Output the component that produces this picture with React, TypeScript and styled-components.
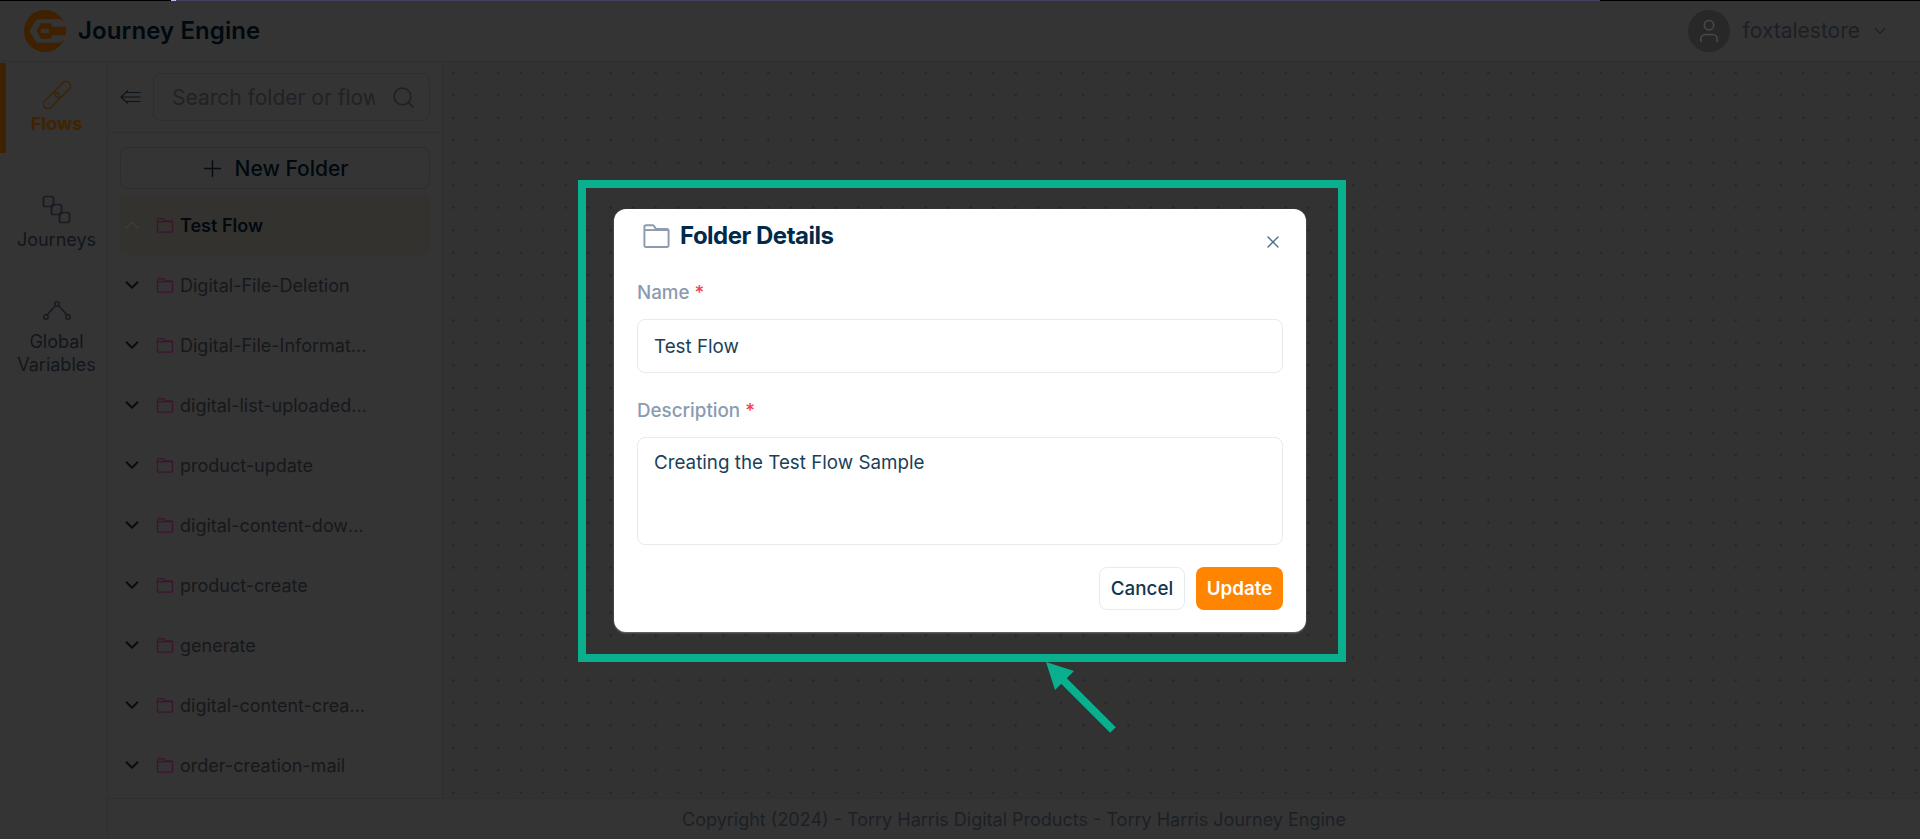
import styled, { createGlobalStyle } from 'styled-components';
import { ChevronDown, ChevronUp, Plus, Search, User, X } from 'lucide-react';

const GlobalStyle = createGlobalStyle`
  html, body {
    margin: 0;
    padding: 0;
    background: #333;
    font-family: Inter, "Noto Sans", sans-serif;
    overflow: hidden;
  }
  * {
    box-sizing: border-box;
  }
`;

const FLOWS = [
  'Digital-File-Deletion',
  'Digital-File-Information-Details',
  'digital-list-uploaded-files',
  'product-update',
  'digital-content-download',
  'product-create',
  'generate',
  'digital-content-creation',
  'order-creation-mail',
];

const FolderIcon = ({ size = 18, color = '#3c1430' }: { size?: number; color?: string }) => (
  <svg width={size} height={size} viewBox="0 0 24 24" fill="none" stroke={color} strokeWidth={size > 20 ? 1.6 : 1.8} strokeLinejoin="round">
    <path d="M2 5A1.500 1.500 0 0 1 3.500 3.500h5.200c.5 0 .9.2 1.200.6L11.500 6.500h9A1.500 1.500 0 0 1 22 8v12a1.500 1.500 0 0 1-1.500 1.500h-17A1.500 1.500 0 0 1 2 20Z" />
    <path d="M2 7.500h20" />
  </svg>
);

const App = () => {
  return (
    <>
      <GlobalStyle />
      <Page>
        <TopStrip>
          <StripPart $width={171} $color="#000" />
          <StripPart $width={5} $color="#c9b4f0" />
          <StripPart $width={1424} $color="#4a3f63" />
          <StripPart $width={320} $color="#000" />
        </TopStrip>
        <Dimmed>
          <Header>
            <Brand>
              <svg width="42" height="42" viewBox="0 0 42 42">
                <path d="M40 12A21 21 0 1 0 40 30L36 32.700H12.700L5.300 21L12.700 9.300H36Z" fill="#3f2100" />
                <path fillRule="evenodd" d="M12.700 21L16.700 13.300H27.700V16.700H42V25.300H27.700V28.700H16.700ZM17 19V23H25V19Z" fill="#3f2100" />
              </svg>
              <BrandName>Journey Engine</BrandName>
            </Brand>
            <UserMenu>
              <Avatar>
                <User size={28} strokeWidth={1.4} color="#484848" />
              </Avatar>
              <UserName>foxtalestore</UserName>
              <ChevronDown size={18} strokeWidth={1.6} color="#1c2026" />
            </UserMenu>
          </Header>
          <Main>
            <Rail>
              <RailItem $active $gap={25}>
                <svg width="30" height="30" viewBox="0 0 30 30" fill="none" stroke="#3f2100" strokeWidth="1.300">
                  <rect x="-9.500" y="-4.500" width="19" height="9" rx="4.500" transform="translate(20.500 9.500) rotate(-45)" />
                  <rect x="-9.500" y="-4.500" width="19" height="9" rx="4.500" transform="translate(9.500 20.500) rotate(-45)" />
                </svg>
                <RailLabel $active>Flows</RailLabel>
              </RailItem>
              <RailItem $gap={32}>
                <svg width="30" height="30" viewBox="0 0 30 30" fill="none" stroke="#181c22" strokeWidth="1.700">
                  <rect x="1.500" y="1.500" width="10" height="10" rx="2" />
                  <rect x="9.500" y="9.500" width="10" height="10" rx="2" />
                  <rect x="17.500" y="17.500" width="10" height="10" rx="2" />
                </svg>
                <RailLabel>Journeys</RailLabel>
              </RailItem>
              <RailItem $gap={0}>
                <svg width="30" height="27" viewBox="0 0 30 27" fill="none" stroke="#181c22" strokeWidth="1.600">
                  <path d="M5 15L13 6M17 6L25 15" />
                  <circle cx="15" cy="4" r="2.200" />
                  <circle cx="4" cy="17" r="2.200" />
                  <circle cx="26" cy="17" r="2.200" />
                </svg>
                <RailLabel>Global Variables</RailLabel>
              </RailItem>
            </Rail>
            <Workspace>
              <Columns>
                <Sidebar>
                  <SearchRow>
                    <svg width="21" height="16" viewBox="0 0 21 16" fill="none" stroke="#0b141b" strokeWidth="1.200">
                      <path d="M8 1.500L1 8l7 6.500M1 8h19.500M6 3.500h14.500M6 12.500h14.500" />
                    </svg>
                    <SearchBox>
                      <SearchText>Search folder or flow</SearchText>
                      <Search size={25} strokeWidth={1.500} color="#1f2125" />
                    </SearchBox>
                  </SearchRow>
                  <NewFolder>
                    <Plus size={27} strokeWidth={1.300} color="#050d13" />
                    <span>New Folder</span>
                  </NewFolder>
                  <Tree>
                    <TreeRow $selected>
                      <ChevronUp size={22} strokeWidth={2} color="#3b3b38" />
                      <FolderIcon />
                      <TreeLabel $selected>Test Flow</TreeLabel>
                    </TreeRow>
                    {FLOWS.map((flow) => (
                      <TreeRow key={flow}>
                        <ChevronDown size={22} strokeWidth={2} color="#060d12" />
                        <FolderIcon />
                        <TreeLabel>{flow}</TreeLabel>
                      </TreeRow>
                    ))}
                  </Tree>
                </Sidebar>
                <Canvas />
              </Columns>
              <Footer>Copyright (2024) - Torry Harris Digital Products - Torry Harris Journey Engine</Footer>
            </Workspace>
          </Main>
        </Dimmed>
        <Backdrop>
          <Modal>
            <ModalHeader>
              <FolderIcon size={29} color="#8a9bb0" />
              <ModalTitle>Folder Details</ModalTitle>
              <CloseButton>
                <X size={20} strokeWidth={1.600} color="#4a6d85" />
              </CloseButton>
            </ModalHeader>
            <Field>
              <FieldLabel>
                Name <Required>*</Required>
              </FieldLabel>
              <TextBox>Test Flow</TextBox>
            </Field>
            <Field>
              <FieldLabel>
                Description <Required>*</Required>
              </FieldLabel>
              <TextBox $tall>Creating the Test Flow Sample</TextBox>
            </Field>
            <Actions>
              <CancelButton>Cancel</CancelButton>
              <UpdateButton>Update</UpdateButton>
            </Actions>
          </Modal>
        </Backdrop>
        <Highlight />
        <Arrow width="80" height="80" viewBox="0 0 80 80">
          <path d="M72 73L19 20" stroke="#0aaf8d" strokeWidth="8" fill="none" />
          <path d="M5 5L33 14L14 33Z" fill="#0aaf8d" />
        </Arrow>
      </Page>
    </>
  );
};

const Page = styled.div`
  position: relative;
  width: 1920px;
  height: 839px;
  overflow: hidden;
  background: #343434;
  color: #1e2024;
`;

const Dimmed = styled.div`
  height: 100%;
  display: flex;
  flex-direction: column;
  opacity: 0.999;
`;

const TopStrip = styled.div`
  position: absolute;
  top: 0;
  left: 0;
  z-index: 5;
  display: flex;
  height: 1px;
`;

const StripPart = styled.div<{ $width: number; $color: string }>`
  width: ${(p) => p.$width}px;
  background: ${(p) => p.$color};
`;

const Header = styled.header`
  height: 62px;
  flex: none;
  display: flex;
  align-items: center;
  justify-content: space-between;
  padding: 0 31px 0 24px;
  border-bottom: 1px solid #2f2f2f;
`;

const Brand = styled.div`
  display: flex;
  align-items: center;
  gap: 12px;
`;

const BrandName = styled.div`
  font-size: 24px;
  font-weight: 600;
  letter-spacing: 0.100px;
  color: #00090f;
`;

const UserMenu = styled.div`
  display: flex;
  align-items: center;
  gap: 13px;
`;

const Avatar = styled.div`
  width: 42px;
  height: 42px;
  border-radius: 50%;
  background: #282828;
  display: flex;
  align-items: center;
  justify-content: center;
`;

const UserName = styled.div`
  font-size: 21px;
  color: #1c2026;
  margin-right: -2px;
`;

const Main = styled.div`
  flex: 1;
  display: flex;
  min-height: 0;
`;

const Rail = styled.nav`
  width: 108px;
  flex: none;
  display: flex;
  flex-direction: column;
  padding-top: 1px;
  border-right: 1px solid #2f2f2f;
`;

const RailItem = styled.div<{ $active?: boolean; $gap: number }>`
  height: ${(p) => (p.$active ? '90px' : 'auto')};
  display: flex;
  flex-direction: column;
  align-items: center;
  padding-top: 17px;
  margin-bottom: ${(p) => p.$gap}px;
  border-left: 6px solid ${(p) => (p.$active ? '#3f2200' : 'transparent')};
`;

const RailLabel = styled.div<{ $active?: boolean }>`
  margin-top: ${(p) => (p.$active ? '2px' : '3px')};
  width: 90px;
  font-size: 18px;
  line-height: 23px;
  text-align: center;
  font-weight: ${(p) => (p.$active ? 700 : 400)};
  color: ${(p) => (p.$active ? '#422300' : '#12161c')};
`;

const Workspace = styled.div`
  flex: 1;
  display: flex;
  flex-direction: column;
  min-width: 0;
`;

const Columns = styled.div`
  flex: 1;
  display: flex;
  min-height: 0;
`;

const Sidebar = styled.aside`
  width: 335px;
  flex: none;
  border-right: 1px solid #2f2f2f;
  overflow: hidden;
`;

const SearchRow = styled.div`
  height: 71px;
  display: flex;
  align-items: center;
  gap: 12px;
  padding: 0 12px;
  border-bottom: 1px solid #2f2f2f;
`;

const SearchBox = styled.div`
  flex: 1;
  height: 48px;
  display: flex;
  align-items: center;
  justify-content: space-between;
  padding: 0 13px 0 18px;
  border: 1px solid #2e2e2e;
  border-radius: 8px;
`;

const SearchText = styled.div`
  width: 203px;
  overflow: hidden;
  white-space: nowrap;
  font-size: 21px;
  color: #202226;
`;

const NewFolder = styled.div`
  height: 42px;
  margin: 14px 12px 6px;
  padding-right: 3px;
  display: flex;
  align-items: center;
  justify-content: center;
  gap: 9px;
  border: 1px solid #2e2e2e;
  border-radius: 8px;
  font-size: 21px;
  font-weight: 500;
  color: #00090f;
`;

const Tree = styled.div`
  margin: 0 12px;
`;

const TreeRow = styled.div<{ $selected?: boolean }>`
  height: 60px;
  display: flex;
  align-items: center;
  padding-left: 1px;
  gap: 13px;
  border-radius: 8px;
  background: ${(p) => (p.$selected ? '#33322f' : 'transparent')};
`;

const TreeLabel = styled.div<{ $selected?: boolean }>`
  width: 187px;
  margin-left: -7px;
  overflow: hidden;
  white-space: nowrap;
  text-overflow: ellipsis;
  font-size: 18px;
  font-weight: ${(p) => (p.$selected ? 600 : 400)};
  color: ${(p) => (p.$selected ? '#02090f' : '#16181c')};
`;

const Canvas = styled.div`
  flex: 1;
  background-color: #323232;
  background-image: radial-gradient(circle, #252525 1px, transparent 1.200px);
  background-size: 22.500px 22.500px;
  background-position: -1px -0.500px;
`;

const Footer = styled.footer`
  height: 41px;
  flex: none;
  display: flex;
  align-items: center;
  justify-content: center;
  border-top: 1px solid #2f2f2f;
  font-size: 18px;
  color: #1c2026;
`;

const Backdrop = styled.div`
  position: absolute;
  inset: 1px 0 0;
  display: flex;
  align-items: center;
  justify-content: center;
`;

const Modal = styled.div`
  width: 692px;
  height: 423px;
  padding: 0 23px;
  background: #fff;
  border-radius: 12px;
  box-shadow: 0 1px 2px rgba(255, 255, 255, 0.300);
  display: flex;
  flex-direction: column;
`;

const ModalHeader = styled.div`
  height: 73px;
  padding: 12px 0 0 5px;
  display: flex;
  align-items: flex-start;
  gap: 9px;
  position: relative;
`;

const ModalTitle = styled.h2`
  margin: 0;
  font-size: 24px;
  line-height: 29px;
  font-weight: 700;
  letter-spacing: -0.500px;
  color: #012a4a;
`;

const CloseButton = styled.div`
  position: absolute;
  right: 0;
  top: 23px;
  display: flex;
`;

const Field = styled.div`
  display: flex;
  flex-direction: column;
  margin-bottom: 27px;
`;

const FieldLabel = styled.label`
  font-size: 18.800px;
  line-height: 22px;
  font-weight: 500;
  color: #8a9bb0;
  margin-bottom: 15px;
`;

const Required = styled.span`
  color: #f04452;
`;

const TextBox = styled.div<{ $tall?: boolean }>`
  height: ${(p) => (p.$tall ? '108px' : '54px')};
  padding: ${(p) => (p.$tall ? '13px 16px' : '1px 16px 0')};
  display: flex;
  align-items: ${(p) => (p.$tall ? 'flex-start' : 'center')};
  border: 1px solid #e8eaed;
  border-radius: 8px;
  font-size: 18.800px;
  color: #1a3f58;
`;

const Actions = styled.div`
  display: flex;
  justify-content: flex-end;
  gap: 11px;
  margin-top: -5px;
`;

const CancelButton = styled.div`
  width: 86px;
  height: 43px;
  display: flex;
  align-items: center;
  justify-content: center;
  border: 1px solid #e8eaed;
  border-radius: 8px;
  font-size: 18.800px;
  font-weight: 500;
  color: #12364f;
`;

const UpdateButton = styled.div`
  width: 87px;
  height: 43px;
  display: flex;
  align-items: center;
  justify-content: center;
  border-radius: 8px;
  background: #ff8500;
  font-size: 18.800px;
  font-weight: 600;
  color: #fff;
`;

const Highlight = styled.div`
  position: absolute;
  left: 578px;
  top: 180px;
  width: 768px;
  height: 482px;
  border: 8px solid #0aaf8d;
  pointer-events: none;
`;

const Arrow = styled.svg`
  position: absolute;
  left: 1041px;
  top: 657px;
`;

export default App;
